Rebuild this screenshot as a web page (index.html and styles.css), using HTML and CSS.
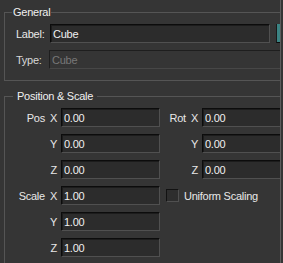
FILE: index.html
```html
<!DOCTYPE html>
<html lang="en">
<head>
    <meta charset="UTF-8">
    <title>Object Properties</title>
    <link rel="stylesheet" href="styles.css">
</head>
<body>
    <div class="panel">
        <fieldset class="group group-general">
            <legend>General</legend>
            <div class="row">
                <label class="lbl">Label:</label>
                <input class="field field-label" value="Cube">
                <span class="swatch"></span>
            </div>
            <div class="row row-type">
                <label class="lbl">Type:</label>
                <input class="field field-wide" value="Cube" disabled>
            </div>
        </fieldset>

        <fieldset class="group group-xform">
            <legend>Position &amp; Scale</legend>
            <div class="xform">
                <label class="axis"><span>Pos</span><span class="ax">X</span></label>
                <input class="field" value="0.00">
                <label class="axis"><span>Rot</span><span class="ax">X</span></label>
                <input class="field" value="0.00">

                <label class="axis"><span class="ax">Y</span></label>
                <input class="field" value="0.00">
                <label class="axis"><span class="ax">Y</span></label>
                <input class="field" value="0.00">

                <label class="axis"><span class="ax">Z</span></label>
                <input class="field" value="0.00">
                <label class="axis"><span class="ax">Z</span></label>
                <input class="field" value="0.00">

                <label class="axis"><span>Scale</span><span class="ax">X</span></label>
                <input class="field" value="1.00">
                <label class="check"><span class="box"></span>Uniform Scaling</label>

                <label class="axis"><span class="ax">Y</span></label>
                <input class="field" value="1.00">
                <span></span><span></span>

                <label class="axis"><span class="ax">Z</span></label>
                <input class="field" value="1.00">
            </div>
        </fieldset>
    </div>
</body>
</html>
```

FILE: styles.css
```css
body { margin: 0; background: #353535; color: #e8e8e8; font: 11px "Liberation Sans", Arial, sans-serif; letter-spacing: -0.25px; overflow: hidden; }
.panel { width: 281px; height: 263px; box-sizing: border-box; overflow: hidden; padding-top: 5px; border-right: 1px solid #5c5c5c; }

.group { margin: 0 -40px 0 4px; padding: 5px 0 11px 11px; border: 1px solid #555; min-width: 0; }
.group legend { line-height: 14px; color: #f0f0f0; }
.group-general legend { margin-left: -4px; padding: 0 1px; }
.group-xform { margin-top: 8px; }
.group-xform legend { margin-left: -3px; padding: 0 4px; }

.row { display: flex; align-items: center; height: 19px; }
.row + .row { margin-top: 7px; }
.lbl { width: 34px; }
.row-type .lbl { width: 33px; color: #d8d8d8; }

.field { box-sizing: border-box; height: 19px; margin: 0; padding: 0 2px; background: #2c2c2c; color: #f0f0f0; font: inherit; letter-spacing: inherit; border: 1px solid; border-color: #0c0c0c #505050 #505050 #0c0c0c; box-shadow: inset 1px 1px #1c1c1c; outline: none; }
.field-label { width: 220px; }
.field-wide { flex: 1; }
.field:disabled { background: #353535; color: #787878; border-color: #1e1e1e #474747 #474747 #1e1e1e; box-shadow: none; }
.swatch { width: 12px; height: 19px; margin-left: 6px; box-sizing: border-box; background: #3b8383; border-left: 1px solid #1a1a1a; border-bottom: 1px solid #0c0c0c; }

.xform { display: grid; grid-template-columns: 45px 99px 42px 1fr; grid-auto-rows: 19px; row-gap: 7px; }
.axis { display: flex; justify-content: flex-end; align-items: center; padding-right: 4px; }
.axis .ax { margin-left: 5px; }
.check { grid-column: 3 / 5; display: flex; align-items: center; padding-left: 6px; }
.check .box { width: 13px; height: 13px; box-sizing: border-box; margin-right: 5px; background: #2e2e2e; border: 1px solid; border-color: #121212 #505050 #505050 #121212; }
```
